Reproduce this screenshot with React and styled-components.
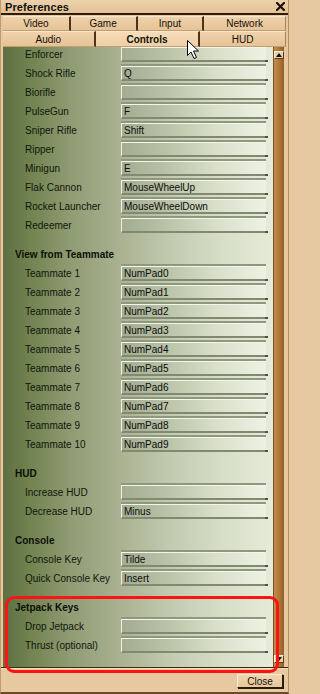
import React from "react";
import styled, { createGlobalStyle } from "styled-components";

const GlobalStyle = createGlobalStyle`
  html, body {
    margin: 0;
    padding: 0;
    background: #e7c9a1;
  }
  * {
    box-sizing: border-box;
  }
`;

const Window = styled.div`
  position: relative;
  width: 289px;
  height: 694px;
  display: flex;
  flex-direction: column;
  background: #e7c9a1;
  border-left: 1px solid #c49a68;
  border-right: 1px solid #b88d5c;
  border-bottom: 2px solid #6a4a28;
  font-family: "Liberation Sans", Arial, sans-serif;
  font-size: 10px;
  color: #111;
  overflow: hidden;
`;

const TitleBar = styled.div`
  height: 15px;
  display: flex;
  align-items: center;
  justify-content: space-between;
  padding: 0 3px 0 4px;
  background: linear-gradient(to bottom, #ecd2ac, #e4c296);
  border-bottom: 2px solid #2c1e0e;
`;

const Title = styled.span`
  font-size: 11px;
  font-weight: bold;
  letter-spacing: 0.1px;
`;

const CloseIcon = styled.svg`
  display: block;
`;

const TabStrip = styled.div`
  padding: 1px 2px 0 2px;
  display: flex;
  flex-direction: column;
`;

const TabRow = styled.div`
  display: flex;
  height: ${(p) => p.$h}px;
`;

const Tab = styled.div`
  width: ${(p) => p.$w}px;
  display: flex;
  align-items: center;
  justify-content: center;
  background: ${(p) =>
    p.$active
      ? "linear-gradient(to bottom, #f6dcb8, #efcfa6)"
      : "linear-gradient(to bottom, #efd2ab, #e6c397)"};
  border-top: 1px solid #f9e8cf;
  border-bottom: 1px solid #c39e70;
  border-right: ${(p) => (p.$last ? "1px solid #a88058" : "2px solid #4e3318")};
  font-weight: ${(p) => (p.$active ? "bold" : "normal")};
  color: #141008;
`;

const Panel = styled.div`
  height: 620px;
  margin-left: 2px;
  width: 281px;
  display: flex;
`;

const ListArea = styled.div`
  flex: 1;
  overflow: hidden;
  background: linear-gradient(
    to right,
    #5d7043 0%,
    #728250 10%,
    #909c74 25%,
    #a8b08f 42%,
    #c2cab0 62%,
    #d8dfc8 82%,
    #e5ebd8 100%
  );
`;

const List = styled.div`
  margin-top: -2px;
  display: flex;
  flex-direction: column;
`;

const Row = styled.div`
  display: flex;
  align-items: center;
  height: 19px;
`;

const Label = styled.div`
  width: 118px;
  padding-left: 22px;
  white-space: nowrap;
  color: #10160a;
`;

const KeyBox = styled.div`
  position: relative;
  width: 145px;
  height: 15px;
  line-height: 14px;
  padding-left: 2px;
  color: #0c0c0c;
  background: linear-gradient(
    to right,
    #a2ac90 0%,
    #b9c2a6 30%,
    #d9dfca 65%,
    #eef2e4 100%
  );
  border-top: 1px solid #f3f6ea;
  border-left: 1px solid #eef2e4;
  border-bottom: 2px solid #7f8a70;
  box-shadow: 0 -2px 0 #8e987e;
  white-space: nowrap;

  &::after {
    content: "";
    position: absolute;
    right: -2px;
    bottom: -2px;
    width: 3px;
    height: 2px;
    background: #4c5640;
  }
`;

const SectionHeader = styled.div`
  height: 29px;
  display: flex;
  align-items: flex-end;
  padding: 0 0 4px 12px;
  font-weight: bold;
  color: #0c1006;
`;

const Scrollbar = styled.div`
  width: 11px;
  display: flex;
  flex-direction: column;
  justify-content: space-between;
  align-items: center;
  padding: 4px 0 4px;
  background: linear-gradient(to right, #c48c4c, #b07838 50%, #94602a);
  border-left: 1px solid #7a5020;
`;

const ArrowButton = styled.div`
  width: 10px;
  height: 8px;
  display: flex;
  align-items: center;
  justify-content: center;
  background: #e8d2ae;
  border: 1px solid #5a3a18;
  border-top-color: #fff0d8;
  border-left-color: #fff0d8;
`;

const Footer = styled.div`
  flex: 1;
  display: flex;
  justify-content: flex-end;
  align-items: flex-start;
  padding: 6px 5px 0 0;
  border-top: 1px solid #3a2810;
  box-shadow: inset 0 1px 0 #f6e0c0;
`;

const CloseButton = styled.div`
  width: 46px;
  height: 14px;
  display: flex;
  align-items: center;
  justify-content: center;
  font-size: 10px;
  background: linear-gradient(to bottom, #f0d6b0, #e6c79a);
  border: 1px solid #2a1c0a;
  border-top-color: #fbecd4;
  border-left-color: #fbecd4;
  box-shadow: 1px 1px 0 #2a1c0a;
`;

const Highlight = styled.div`
  position: absolute;
  left: 4px;
  top: 596px;
  width: 274px;
  height: 77px;
  border: 3px solid #ff1212;
  border-radius: 9px;
  pointer-events: none;
`;

const Cursor = styled.svg`
  position: absolute;
  left: 186px;
  top: 40px;
  pointer-events: none;
`;

const groups = [
  {
    title: null,
    rows: [
      ["Enforcer", ""],
      ["Shock Rifle", "Q"],
      ["Biorifle", ""],
      ["PulseGun", "F"],
      ["Sniper Rifle", "Shift"],
      ["Ripper", ""],
      ["Minigun", "E"],
      ["Flak Cannon", "MouseWheelUp"],
      ["Rocket Launcher", "MouseWheelDown"],
      ["Redeemer", ""],
    ],
  },
  {
    title: "View from Teammate",
    rows: Array.from({ length: 10 }, (_, i) => [
      `Teammate ${i + 1}`,
      `NumPad${i}`,
    ]),
  },
  {
    title: "HUD",
    rows: [
      ["Increase HUD", ""],
      ["Decrease HUD", "Minus"],
    ],
  },
  {
    title: "Console",
    rows: [
      ["Console Key", "Tilde"],
      ["Quick Console Key", "Insert"],
    ],
  },
  {
    title: "Jetpack Keys",
    rows: [
      ["Drop Jetpack", ""],
      ["Thrust (optional)", ""],
    ],
  },
];

const tabsTop = [
  { name: "Video", w: 68 },
  { name: "Game", w: 67 },
  { name: "Input", w: 67 },
  { name: "Network", w: 82, last: true },
];

const tabsBottom = [
  { name: "Audio", w: 93 },
  { name: "Controls", w: 105, active: true },
  { name: "HUD", w: 86, last: true },
];

const Triangle = ({ down }) => (
  <svg width="6" height="4" viewBox="0 0 6 4">
    <path d={down ? "M0 0 L6 0 L3 4 Z" : "M0 4 L6 4 L3 0 Z"} fill="#111" />
  </svg>
);

const App = () => {
  return (
    <>
      <GlobalStyle />
      <Window>
        <TitleBar>
          <Title>Preferences</Title>
          <CloseIcon width="9" height="9" viewBox="0 0 9 9">
            <path
              d="M1 1 L8 8 M8 1 L1 8"
              stroke="#1a1208"
              strokeWidth="2.2"
              strokeLinecap="square"
            />
          </CloseIcon>
        </TitleBar>
        <TabStrip>
          <TabRow $h={15}>
            {tabsTop.map((t) => (
              <Tab key={t.name} $w={t.w} $last={t.last}>
                {t.name}
              </Tab>
            ))}
          </TabRow>
          <TabRow $h={16}>
            {tabsBottom.map((t) => (
              <Tab key={t.name} $w={t.w} $last={t.last} $active={t.active}>
                {t.name}
              </Tab>
            ))}
          </TabRow>
        </TabStrip>
        <Panel>
          <ListArea>
            <List>
              {groups.map((g, gi) => (
                <React.Fragment key={gi}>
                  {g.title && <SectionHeader>{g.title}</SectionHeader>}
                  {g.rows.map(([label, key]) => (
                    <Row key={label}>
                      <Label>{label}</Label>
                      <KeyBox>{key}</KeyBox>
                    </Row>
                  ))}
                </React.Fragment>
              ))}
            </List>
          </ListArea>
          <Scrollbar>
            <ArrowButton>
              <Triangle />
            </ArrowButton>
            <ArrowButton>
              <Triangle down />
            </ArrowButton>
          </Scrollbar>
        </Panel>
        <Footer>
          <CloseButton>Close</CloseButton>
        </Footer>
        <Highlight />
        <Cursor width="13" height="20" viewBox="0 0 13 20">
          <path
            d="M0.5 0.5 L0.5 15.5 L4 12 L7 18.5 L9.5 17.5 L6.5 11 L11.5 11 Z"
            fill="#fff"
            stroke="#000"
            strokeWidth="1"
          />
        </Cursor>
      </Window>
    </>
  );
};

export default App;
